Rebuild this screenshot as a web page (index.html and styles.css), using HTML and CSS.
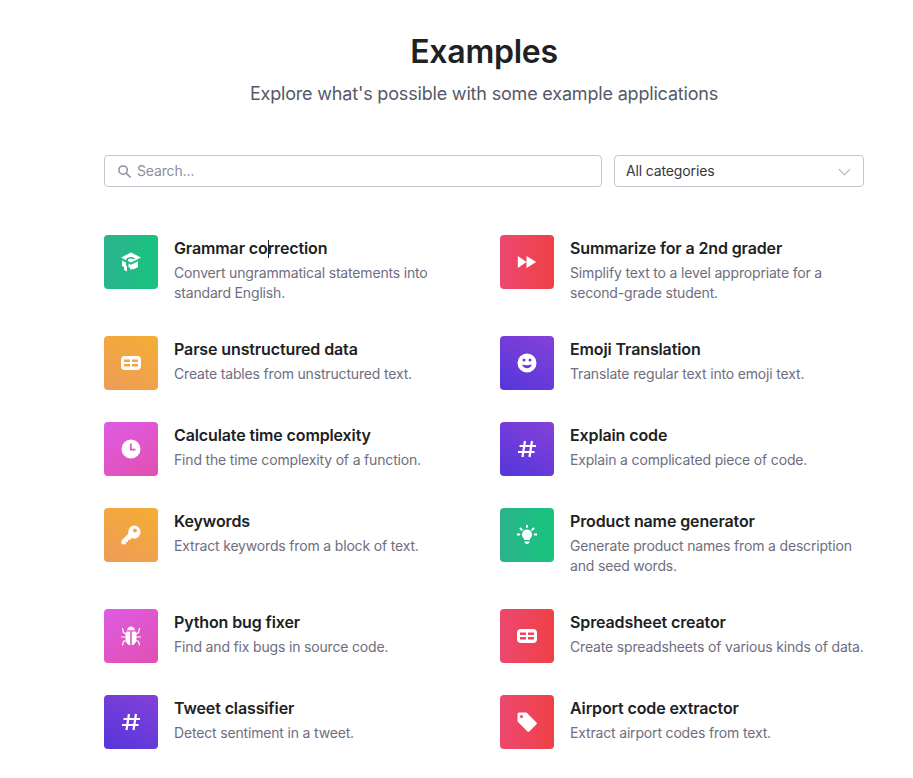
FILE: index.html
```html
<!DOCTYPE html>
<html lang="en">
<head>
<meta charset="utf-8">
<title>Examples</title>
<link rel="stylesheet" href="styles.css">
</head>
<body>
<main class="page">
  <header class="head">
    <h1 class="head-title">Examples</h1>
    <p class="head-sub">Explore what's possible with some example applications</p>
  </header>
  <div class="filters">
    <div class="search">
      <svg class="search-icon" viewBox="0 0 16 16"><circle cx="6.5" cy="6.5" r="4.5"/><path d="M10 10l4.5 4.5"/></svg>
      <span>Search...</span>
    </div>
    <div class="select">
      <span>All categories</span>
      <svg class="chevron" viewBox="0 0 14 8"><path d="M1 1l6 6 6-6"/></svg>
    </div>
  </div>
  <section class="grid">
    <article class="item">
      <div class="tile green"><svg class="glyph" viewBox="0 0 20 20"><path d="M10 .5L20 5.500 10 10.500 7 9V8c0-.8 1-1.500 3-1.500 1 0 1.800.2 2.500.7l1.500-.7C13 5.500 11.500 5 10 5 7 5 5 6.500 5 8v.2L0 5.500zM1 8.500l4 2v3l1 .5v5.500l-3-1.500V15L1 14zM7.500 11.500l2.500 1.200 7-3.500v5.800C15 16.500 12.500 17.500 9 17.500V15.500H7.500z"/></svg></div>
      <div class="copy">
        <h2 class="name">Grammar co<span class="caret"></span>rrection</h2>
        <p class="desc">Convert ungrammatical statements into standard English.</p>
      </div>
    </article>
    <article class="item">
      <div class="tile red"><svg class="glyph" viewBox="0 0 20 20"><path d="M.8 4v12l8.700-6zM9.500 4v12l9.700-6z"/></svg></div>
      <div class="copy">
        <h2 class="name">Summarize for a 2nd grader</h2>
        <p class="desc">Simplify text to a level appropriate for a second-grade student.</p>
      </div>
    </article>
    <article class="item">
      <div class="tile orange"><svg class="glyph" viewBox="0 0 20 20"><path fill-rule="evenodd" d="M4 3h12a4 4 0 0 1 4 4v6a4 4 0 0 1-4 4H4a4 4 0 0 1-4-4V7a4 4 0 0 1 4-4zM3 6.500V9h6V6.500zM11 6.500V9h6V6.500zM3 11v2.500h6V11zM11 11v2.500h6V11z"/></svg></div>
      <div class="copy">
        <h2 class="name">Parse unstructured data</h2>
        <p class="desc">Create tables from unstructured text.</p>
      </div>
    </article>
    <article class="item">
      <div class="tile purple"><svg class="glyph" viewBox="0 0 20 20"><path fill-rule="evenodd" d="M10 .5a9.500 9.500 0 1 1 0 19 9.500 9.500 0 0 1 0-19zM7 5.500a1.500 1.500 0 1 0 0 3 1.500 1.500 0 0 0 0-3zM13 5.500a1.500 1.500 0 1 0 0 3 1.500 1.500 0 0 0 0-3zM5 11.500c.7 2.400 2.700 3.800 5 3.800s4.300-1.400 5-3.800c-3.200 1.100-6.800 1.100-10 0z"/></svg></div>
      <div class="copy">
        <h2 class="name">Emoji Translation</h2>
        <p class="desc">Translate regular text into emoji text.</p>
      </div>
    </article>
    <article class="item">
      <div class="tile pink"><svg class="glyph" viewBox="0 0 20 20"><path fill-rule="evenodd" d="M10 .5a9.500 9.500 0 1 1 0 19 9.500 9.500 0 0 1 0-19zM9 4.500v7h5.500V9.800h-3.800V4.500z"/></svg></div>
      <div class="copy">
        <h2 class="name">Calculate time complexity</h2>
        <p class="desc">Find the time complexity of a function.</p>
      </div>
    </article>
    <article class="item">
      <div class="tile purple"><svg class="glyph line" viewBox="0 0 20 20"><path d="M8 2L5.500 18M15 2L12.500 18M2.500 7H19M1 13H17.500"/></svg></div>
      <div class="copy">
        <h2 class="name">Explain code</h2>
        <p class="desc">Explain a complicated piece of code.</p>
      </div>
    </article>
    <article class="item">
      <div class="tile orange"><svg class="glyph" viewBox="0 0 20 20"><path fill-rule="evenodd" d="M13 .5a6.500 6.500 0 1 1-2.200 12.600L9 14.900H7v2.100H5v2.200H.5v-3.800l7-7A6.500 6.500 0 0 1 13 .5zM14 3.500a2 2 0 1 0 0 4 2 2 0 0 0 0-4z"/></svg></div>
      <div class="copy">
        <h2 class="name">Keywords</h2>
        <p class="desc">Extract keywords from a block of text.</p>
      </div>
    </article>
    <article class="item">
      <div class="tile green"><svg class="glyph" viewBox="0 0 20 20"><path d="M10 4.500a5 5 0 0 1 3 9v1.500H7v-1.500a5 5 0 0 1 3-9zM7.500 16.500h5c0 1.500-1 2.500-2.500 2.500s-2.500-1-2.500-2.500z"/><path class="ray" d="M10 .5v1.500M3.500 3.500l1.200 1.200M16.500 3.500l-1.200 1.200M.5 9.500h1.800M17.700 9.500h1.800"/></svg></div>
      <div class="copy">
        <h2 class="name">Product name generator</h2>
        <p class="desc">Generate product names from a description and seed words.</p>
      </div>
    </article>
    <article class="item">
      <div class="tile pink"><svg class="glyph" viewBox="0 0 20 20"><path fill-rule="evenodd" d="M6 4.200C6.500 1.800 8 .5 10 .5s3.500 1.300 4 3.700zM5.500 5.500h3.700v13.800C6.600 19 4.500 16.500 4.500 13V8c0-1.100.3-2 1-2.500zM10.800 5.500h3.700c.7.500 1 1.400 1 2.500v5c0 3.500-2.100 6-4.700 6.300z"/><path class="ray thin" d="M1.500 2.500L2.500 6.500 5 8M18.500 2.500L17.500 6.500 15 8M.5 11H4.500M19.500 11H15.500M1.500 19L2.500 15.500 5 14.500M18.500 19L17.500 15.500 15 14.500"/></svg></div>
      <div class="copy">
        <h2 class="name">Python bug fixer</h2>
        <p class="desc">Find and fix bugs in source code.</p>
      </div>
    </article>
    <article class="item">
      <div class="tile red"><svg class="glyph" viewBox="0 0 20 20"><path fill-rule="evenodd" d="M4 3h12a4 4 0 0 1 4 4v6a4 4 0 0 1-4 4H4a4 4 0 0 1-4-4V7a4 4 0 0 1 4-4zM3 6.500V9h6V6.500zM11 6.500V9h6V6.500zM3 11v2.500h6V11zM11 11v2.500h6V11z"/></svg></div>
      <div class="copy">
        <h2 class="name">Spreadsheet creator</h2>
        <p class="desc">Create spreadsheets of various kinds of data.</p>
      </div>
    </article>
    <article class="item">
      <div class="tile purple"><svg class="glyph line" viewBox="0 0 20 20"><path d="M8 2L5.500 18M15 2L12.500 18M2.500 7H19M1 13H17.500"/></svg></div>
      <div class="copy">
        <h2 class="name">Tweet classifier</h2>
        <p class="desc">Detect sentiment in a tweet.</p>
      </div>
    </article>
    <article class="item">
      <div class="tile red"><svg class="glyph" viewBox="0 0 20 20"><path fill-rule="evenodd" d="M2 .5h7.500L19.500 10.500a1.500 1.500 0 0 1 0 1.800l-7.200 7.200a1.500 1.500 0 0 1-1.800 0L.5 9.500V2A1.500 1.500 0 0 1 2 .5zM4.500 3a1.500 1.500 0 1 0 0 3 1.500 1.500 0 0 0 0-3z"/></svg></div>
      <div class="copy">
        <h2 class="name">Airport code extractor</h2>
        <p class="desc">Extract airport codes from text.</p>
      </div>
    </article>
  </section>
</main>
</body>
</html>
```
FILE: styles.css
```css
* { box-sizing: border-box; }
html, body { margin: 0; background: #fff; }
body {
  font-family: Inter, "Liberation Sans", sans-serif;
  color: #202123;
  overflow: hidden;
  height: 778px;
}
.page { width: 760px; margin-left: 104px; padding-top: 32px; }
.head { text-align: center; }
.head-title { margin: 0; font-size: 32px; line-height: 40px; font-weight: 600; letter-spacing: -0.25px; }
.head-sub { margin: 10px 0 0; font-size: 18px; line-height: 24px; color: #565869; letter-spacing: -0.18px; }
.filters { display: flex; gap: 12px; margin-top: 49px; }
.search, .select {
  display: flex;
  align-items: center;
  height: 32px;
  border: 1px solid #c5c5d2;
  border-radius: 4px;
  font-size: 14px;
  letter-spacing: -0.14px;
  padding-bottom: 2px;
}
.search { flex: 1; padding-left: 12px; gap: 5px; color: #8e8ea0; }
.search-icon { width: 15px; height: 15px; fill: none; stroke: #8e8ea0; stroke-width: 1.6; margin-top: 2px; }
.select { width: 250px; padding-left: 11px; padding-right: 12px; justify-content: space-between; color: #353740; }
.chevron { width: 13px; height: 8px; fill: none; stroke: #acacbe; stroke-width: 1.2; margin-top: 4px; }
.grid {
  display: grid;
  grid-template-columns: 364px 364px;
  column-gap: 32px;
  row-gap: 32px;
  margin-top: 48px;
}
.item { display: flex; gap: 16px; align-items: flex-start; }
.tile {
  flex: none;
  width: 54px;
  height: 54px;
  border-radius: 4px;
  display: flex;
  align-items: center;
  justify-content: center;
}
.green { background: linear-gradient(90deg, #2bb38e, #19c37d); }
.red { background: linear-gradient(90deg, #ed4870, #ef4146); }
.orange { background: linear-gradient(30deg, #ef9b58, #f4ae34); }
.purple { background: linear-gradient(30deg, #5436da, #8541d8); }
.pink { background: linear-gradient(150deg, #dd5ce5, #e24fb0); }
.glyph { width: 20px; height: 20px; fill: #fff; }
.glyph.line { fill: none; stroke: #fff; stroke-width: 2.2; }
.ray { fill: none; stroke: #fff; stroke-width: 2; stroke-linecap: round; }
.ray.thin { stroke-width: 1.2; }
.copy { padding-bottom: 1px; }
.name { position: relative; margin: 0 0 2px; font-size: 16px; line-height: 26px; font-weight: 600; letter-spacing: -0.12px; }
.caret {
  display: inline-block;
  width: 1px;
  height: 18px;
  margin-right: -1px;
  background: #202123;
  vertical-align: -4px;
}
.desc { margin: 0; font-size: 14px; line-height: 20px; color: #6e6e80; letter-spacing: -0.17px; }
```
